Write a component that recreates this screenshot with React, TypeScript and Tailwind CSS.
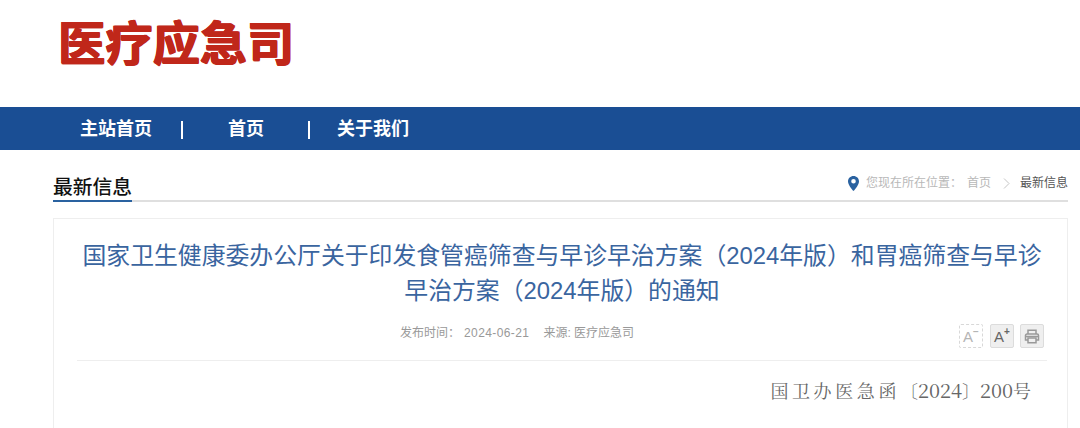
const cjk = "font-['Liberation_Sans','Noto_Sans_CJK_SC',sans-serif]";

function LocationPin() {
  return (
    <svg width="11" height="15" viewBox="0 0 11 15" className="mr-[7px] shrink-0">
      <path d="M5.5 0C2.4 0 0 2.4 0 5.4 0 9.2 5.5 15 5.5 15S11 9.2 11 5.4C11 2.4 8.6 0 5.5 0Zm0 7.6a2.3 2.3 0 1 1 0-4.6 2.3 2.3 0 0 1 0 4.6Z" fill="#2a62a0" />
    </svg>
  );
}

function FontButton({ sign, dashed }: { sign: string; dashed?: boolean }) {
  return (
    <div
      className={
        dashed
          ? 'mr-[1px] flex h-[24px] w-[24px] items-center justify-center rounded-[2px] border border-dashed border-[#d8d8d8] text-[#b5b5b5]'
          : 'flex h-[24px] w-[24px] items-center justify-center rounded-[2px] border border-[#dcdcdc] bg-[#efefef] text-[#666666]'
      }
    >
      <span className="text-[15px] leading-none">A</span>
      <span className="mb-[8px] text-[10px] font-bold leading-none">{sign}</span>
    </div>
  );
}

function PrintButton() {
  return (
    <div className="flex h-[24px] w-[24px] items-center justify-center rounded-[2px] border border-[#dcdcdc] bg-[#efefef]">
      <svg width="16" height="15" viewBox="0 0 16 15" fill="none" stroke="#999999" strokeWidth="1.5">
        <path d="M4 5V1.2h8V5" />
        <path d="M4 11H1.5V6.5A1.5 1.5 0 0 1 3 5h10a1.5 1.5 0 0 1 1.5 1.5V11H12" />
        <path d="M4 9h8v4.8H4z" />
        <path d="M1.5 7.5h13" />
      </svg>
    </div>
  );
}

export default function App() {
  return (
    <div className={`h-[428px] w-[1080px] overflow-hidden bg-white ${cjk}`}>
      <header className="h-[107px] pl-[58px] pt-[20px]">
        <div className="text-[47px] font-bold leading-[47px] tracking-[0.2px] text-[#c0271a] [text-shadow:1px_0_0_#c0271a,0_1px_0_#c0271a,1px_1px_0_#c0271a,-0.5px_0_0_#c0271a]">医疗应急司</div>
      </header>

      <nav className="flex h-[43px] items-center bg-[#1a4e94] pl-[80px] pt-[2px] text-[18px] font-bold text-white">
        <span className="w-[72px]">主站首页</span>
        <span className="ml-[29px] h-[18px] w-[2px] bg-white" />
        <span className="ml-[45px] w-[36px]">首页</span>
        <span className="ml-[44px] h-[18px] w-[2px] bg-white" />
        <span className="ml-[27px] w-[72px]">关于我们</span>
      </nav>

      <div className="ml-[53px] mt-[24px] w-[1015px]">
        <div className="flex h-[28px] items-end justify-between border-b-2 border-[#dfdfdf]">
          <h2 className="-mb-[2px] h-[28px] border-b-2 border-[#2a62a0] text-[19.8px] font-medium leading-[26px] text-[#111111]">最新信息</h2>
          <div className="mb-[9px] flex items-center text-[12px] leading-[16px] text-[#b8b8b8]">
            <LocationPin />
            <span>您现在所在位置：</span>
            <span className="ml-[5px]">首页</span>
            <svg width="7" height="11" viewBox="0 0 7 11" fill="none" stroke="#c4c4c4" strokeWidth="1" className="ml-[12px]">
              <path d="M1 0.5 6 5.5 1 10.5" />
            </svg>
            <span className="ml-[10px] text-[#555555]">最新信息</span>
          </div>
        </div>

        <article className="mt-[16px] h-[300px] border border-[#eeeeee] pl-[23px] pr-[20px] pt-[19px]">
          <h1 className="text-center text-[23.85px] font-normal leading-[35px] text-[#3a659f]">
            国家卫生健康委办公厅关于印发食管癌筛查与早诊早治方案（2024年版）和胃癌筛查与早诊早治方案（2024年版）的通知
          </h1>
          <div className="mt-[11px] flex h-[42px] items-start justify-between border-b border-[#eeeeee] pr-[3px] pt-[5px]">
            <div className="flex pl-[323px] pt-[1px] text-[12px] leading-[16px] text-[#999999]">
              <span>发布时间：</span>
              <span className="ml-[4px] tracking-[0.4px]">2024-06-21</span>
              <span className="ml-[14px]">来源: 医疗应急司</span>
            </div>
            <div className="flex gap-[6px]">
              <FontButton sign="−" dashed />
              <FontButton sign="+" />
              <PrintButton />
            </div>
          </div>
          <p className="mt-[15px] flex justify-end pr-[16px] font-['Noto_Serif_CJK_SC','Liberation_Serif','Noto_Sans_CJK_SC',serif] text-[18px] leading-[28px] text-[#666666]">
            <span className="tracking-[3.6px]">国卫办医急函</span>
            <span>〔</span>
            <span className="text-[20px]">2024</span>
            <span>〕</span>
            <span className="text-[20px]">200</span>
            <span>号</span>
          </p>
        </article>
      </div>
    </div>
  );
}
